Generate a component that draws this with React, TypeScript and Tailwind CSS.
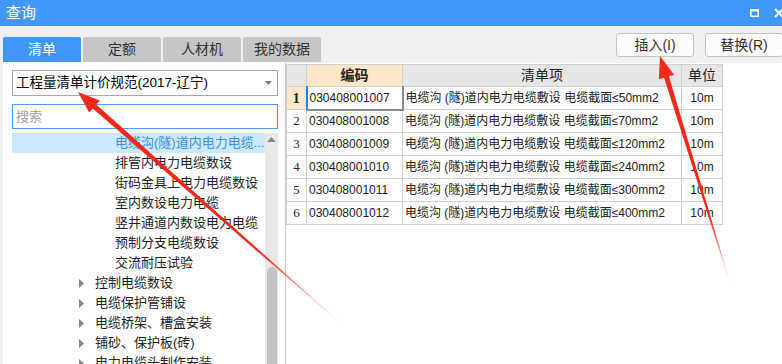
import React from "react";

const tabs = ["清单", "定额", "人材机", "我的数据"];

const treeItems = [
  { text: "电缆沟(隧)道内电力电缆...", child: true, selected: true },
  { text: "排管内电力电缆数设", child: true },
  { text: "街码金具上电力电缆数设", child: true },
  { text: "室内数设电力电缆", child: true },
  { text: "竖井通道内数设电力电缆", child: true },
  { text: "预制分支电缆数设", child: true },
  { text: "交流耐压试验", child: true },
  { text: "控制电缆数设", child: false },
  { text: "电缆保护管铺设", child: false },
  { text: "电缆桥架、槽盒安装", child: false },
  { text: "铺砂、保护板(砖)", child: false },
  { text: "电力电缆头制作安装", child: false },
];

const rows = [
  { code: "030408001007", size: "50" },
  { code: "030408001008", size: "70" },
  { code: "030408001009", size: "120" },
  { code: "030408001010", size: "240" },
  { code: "030408001011", size: "300" },
  { code: "030408001012", size: "400" },
];

function Arrows() {
  return (
    <svg className="absolute inset-0 pointer-events-none" width="782" height="364" viewBox="0 0 782 364">
      <defs>
        <linearGradient id="a1" gradientUnits="userSpaceOnUse" x1="78" y1="92" x2="338" y2="321">
          <stop offset="0" stopColor="#f5281a" />
          <stop offset="0.7" stopColor="#f5281a" />
          <stop offset="1" stopColor="#f5281a" stopOpacity="0" />
        </linearGradient>
        <linearGradient id="a2" gradientUnits="userSpaceOnUse" x1="660" y1="56" x2="730" y2="283">
          <stop offset="0" stopColor="#f5281a" />
          <stop offset="0.7" stopColor="#f5281a" />
          <stop offset="1" stopColor="#f5281a" stopOpacity="0" />
        </linearGradient>
      </defs>
      <polygon
        fill="url(#a1)"
        points="78,92 99.8,100.5 96.2,104.6 338.2,320.8 337.8,321.2 92.8,108.4 89.2,112.5"
      />
      <polygon
        fill="url(#a2)"
        points="660,56 674.15,74.64 668.9,76.26 730.3,282.9 729.7,283.1 664.1,77.74 658.85,79.36"
      />
    </svg>
  );
}

export default function App() {
  return (
    <div className="relative w-[782px] h-[364px] overflow-hidden bg-[#f0f0f0] flex flex-col font-['Liberation_Sans','Noto_Sans_CJK_SC',sans-serif] text-[#222]">
      {/* 标题栏 */}
      <div className="h-[26px] bg-[#4397fb] flex items-center justify-between pl-[6px] shrink-0">
        <span className="text-white text-[15px]">查询</span>
        <div className="flex items-center gap-[15px]">
          <svg width="9" height="8" viewBox="0 0 9 8">
            <rect x="0.75" y="1" width="7.5" height="6.25" fill="none" stroke="white" strokeWidth="1.5" />
            <rect x="0" y="0" width="9" height="2.5" fill="white" />
          </svg>
          <svg width="10" height="10" viewBox="0 0 10 10" className="mr-[-2px]">
            <path d="M1 1 L9 9 M9 1 L1 9" stroke="white" strokeWidth="2" />
          </svg>
        </div>
      </div>

      {/* 标签 + 按钮 */}
      <div className="h-[36px] flex items-start justify-between shrink-0">
        <div className="flex gap-[2px] pl-[3px] pt-[11px]">
          {tabs.map((t, i) => (
            <div
              key={t}
              className={`w-[78px] h-[25px] flex items-center justify-center text-[14px] rounded-t-[2px] ${
                i === 0 ? "bg-[#3e95fa] text-white" : "bg-[#c6c6c6] text-[#333]"
              }`}
            >
              {t}
            </div>
          ))}
        </div>
        <div className="flex gap-[11px] pt-[7px] mr-[-1px]">
          <button className="w-[78px] h-[24px] bg-[#fcfcfc] border border-[#c4c4c4] rounded-[3px] text-[14px] text-[#333]">
            插入(I)
          </button>
          <button className="w-[78px] h-[24px] bg-[#fcfcfc] border border-[#c4c4c4] rounded-[3px] text-[14px] text-[#333]">
            替换(R)
          </button>
        </div>
      </div>

      <div className="flex-1 flex min-h-0">
        {/* 左侧 */}
        <div className="ml-[3px] w-[282px] bg-white flex flex-col pl-[9px] pr-[7px] pt-[8px] min-h-0">
          <div className="h-[26px] border border-[#a8a8a8] flex items-center justify-between pl-[3px] pr-[5px] shrink-0">
            <span className="text-[13.5px] text-black">工程量清单计价规范(2017-辽宁)</span>
            <svg width="7" height="4" viewBox="0 0 7 4">
              <path d="M0 0 H7 L3.5 4 Z" fill="#777" />
            </svg>
          </div>
          <div className="mt-[8px] h-[25px] border border-[#4a9cf5] flex items-center pl-[3px] shrink-0">
            <span className="text-[13px] text-[#a0a0a0]">搜索</span>
          </div>
          <div className="mt-[4px] flex flex-1 min-h-0">
            <div className="flex-1 flex flex-col">
              {treeItems.map((it) => (
                <div
                  key={it.text}
                  className={`h-[20px] shrink-0 flex items-center text-[13px] ${it.selected ? "bg-[#cce8ff] text-[#3a8ee6]" : "text-[#222]"}`}
                >
                  {it.child ? (
                    <span className="pl-[103px] whitespace-nowrap">{it.text}</span>
                  ) : (
                    <>
                      <span className="pl-[67px] w-[83px] flex">
                        <svg width="5" height="9" viewBox="0 0 5 9">
                          <path d="M0 0 L5 4.5 L0 9 Z" fill="#888" />
                        </svg>
                      </span>
                      <span className="whitespace-nowrap">{it.text}</span>
                    </>
                  )}
                </div>
              ))}
            </div>
            <div className="w-[13px] bg-[#e8e8e8] flex flex-col items-center">
              <svg width="9" height="5" viewBox="0 0 9 5" className="mt-[4px]">
                <path d="M0 5 L4.5 0 L9 5 Z" fill="#888" />
              </svg>
              <div className="mt-[125px] flex-1 w-[10px] bg-[#c2c2c2] rounded-t-full" />
            </div>
          </div>
        </div>

        {/* 右侧表格 */}
        <div className="flex-1 mt-[1px] bg-white border-l border-[#c8c8c8] pt-[1px] text-[12px]">
          <table className="border-collapse table-fixed w-[436px]">
            <colgroup>
              <col className="w-[20px]" />
              <col className="w-[96px]" />
              <col className="w-[279px]" />
              <col className="w-[41px]" />
            </colgroup>
            <thead>
              <tr className="h-[22px]">
                <th className="bg-[#e6e6e6] border border-[#d0d0d0]" />
                <th className="bg-[#ffe6c7] border border-[#d0d0d0] text-[14px] font-bold">编码</th>
                <th className="bg-[#e6e6e6] border border-[#d0d0d0] text-[14px] font-normal">清单项</th>
                <th className="bg-[#e6e6e6] border border-[#d0d0d0] text-[14px] font-normal">单位</th>
              </tr>
            </thead>
            <tbody>
              {rows.map((r, i) => (
                <tr key={r.code} className="h-[23px]">
                  <td
                    className={`border border-[#d0d0d0] text-center font-['Liberation_Serif',serif] ${
                      i === 0 ? "bg-[#fde6c9] font-bold text-[14px]" : "text-[13px]"
                    }`}
                  >
                    {i + 1}
                  </td>
                  <td
                    className={`pl-[2px] whitespace-nowrap ${
                      i === 0
                        ? "border-l-2 border-l-[#2a7de9] border-r-2 border-r-[#8c8c8c] border-b-2 border-b-[#8c8c8c] border-t border-t-[#d0d0d0]"
                        : "border border-[#d0d0d0]"
                    }`}
                  >
                    {r.code}
                  </td>
                  <td className="border border-[#d0d0d0] pl-[2px] whitespace-nowrap">
                    电缆沟 (隧)道内电力电缆敷设 电缆截面≤{r.size}mm2
                  </td>
                  <td className="border border-[#d0d0d0] text-center text-[12px]">10m</td>
                </tr>
              ))}
            </tbody>
          </table>
        </div>
      </div>

      <Arrows />
    </div>
  );
}
